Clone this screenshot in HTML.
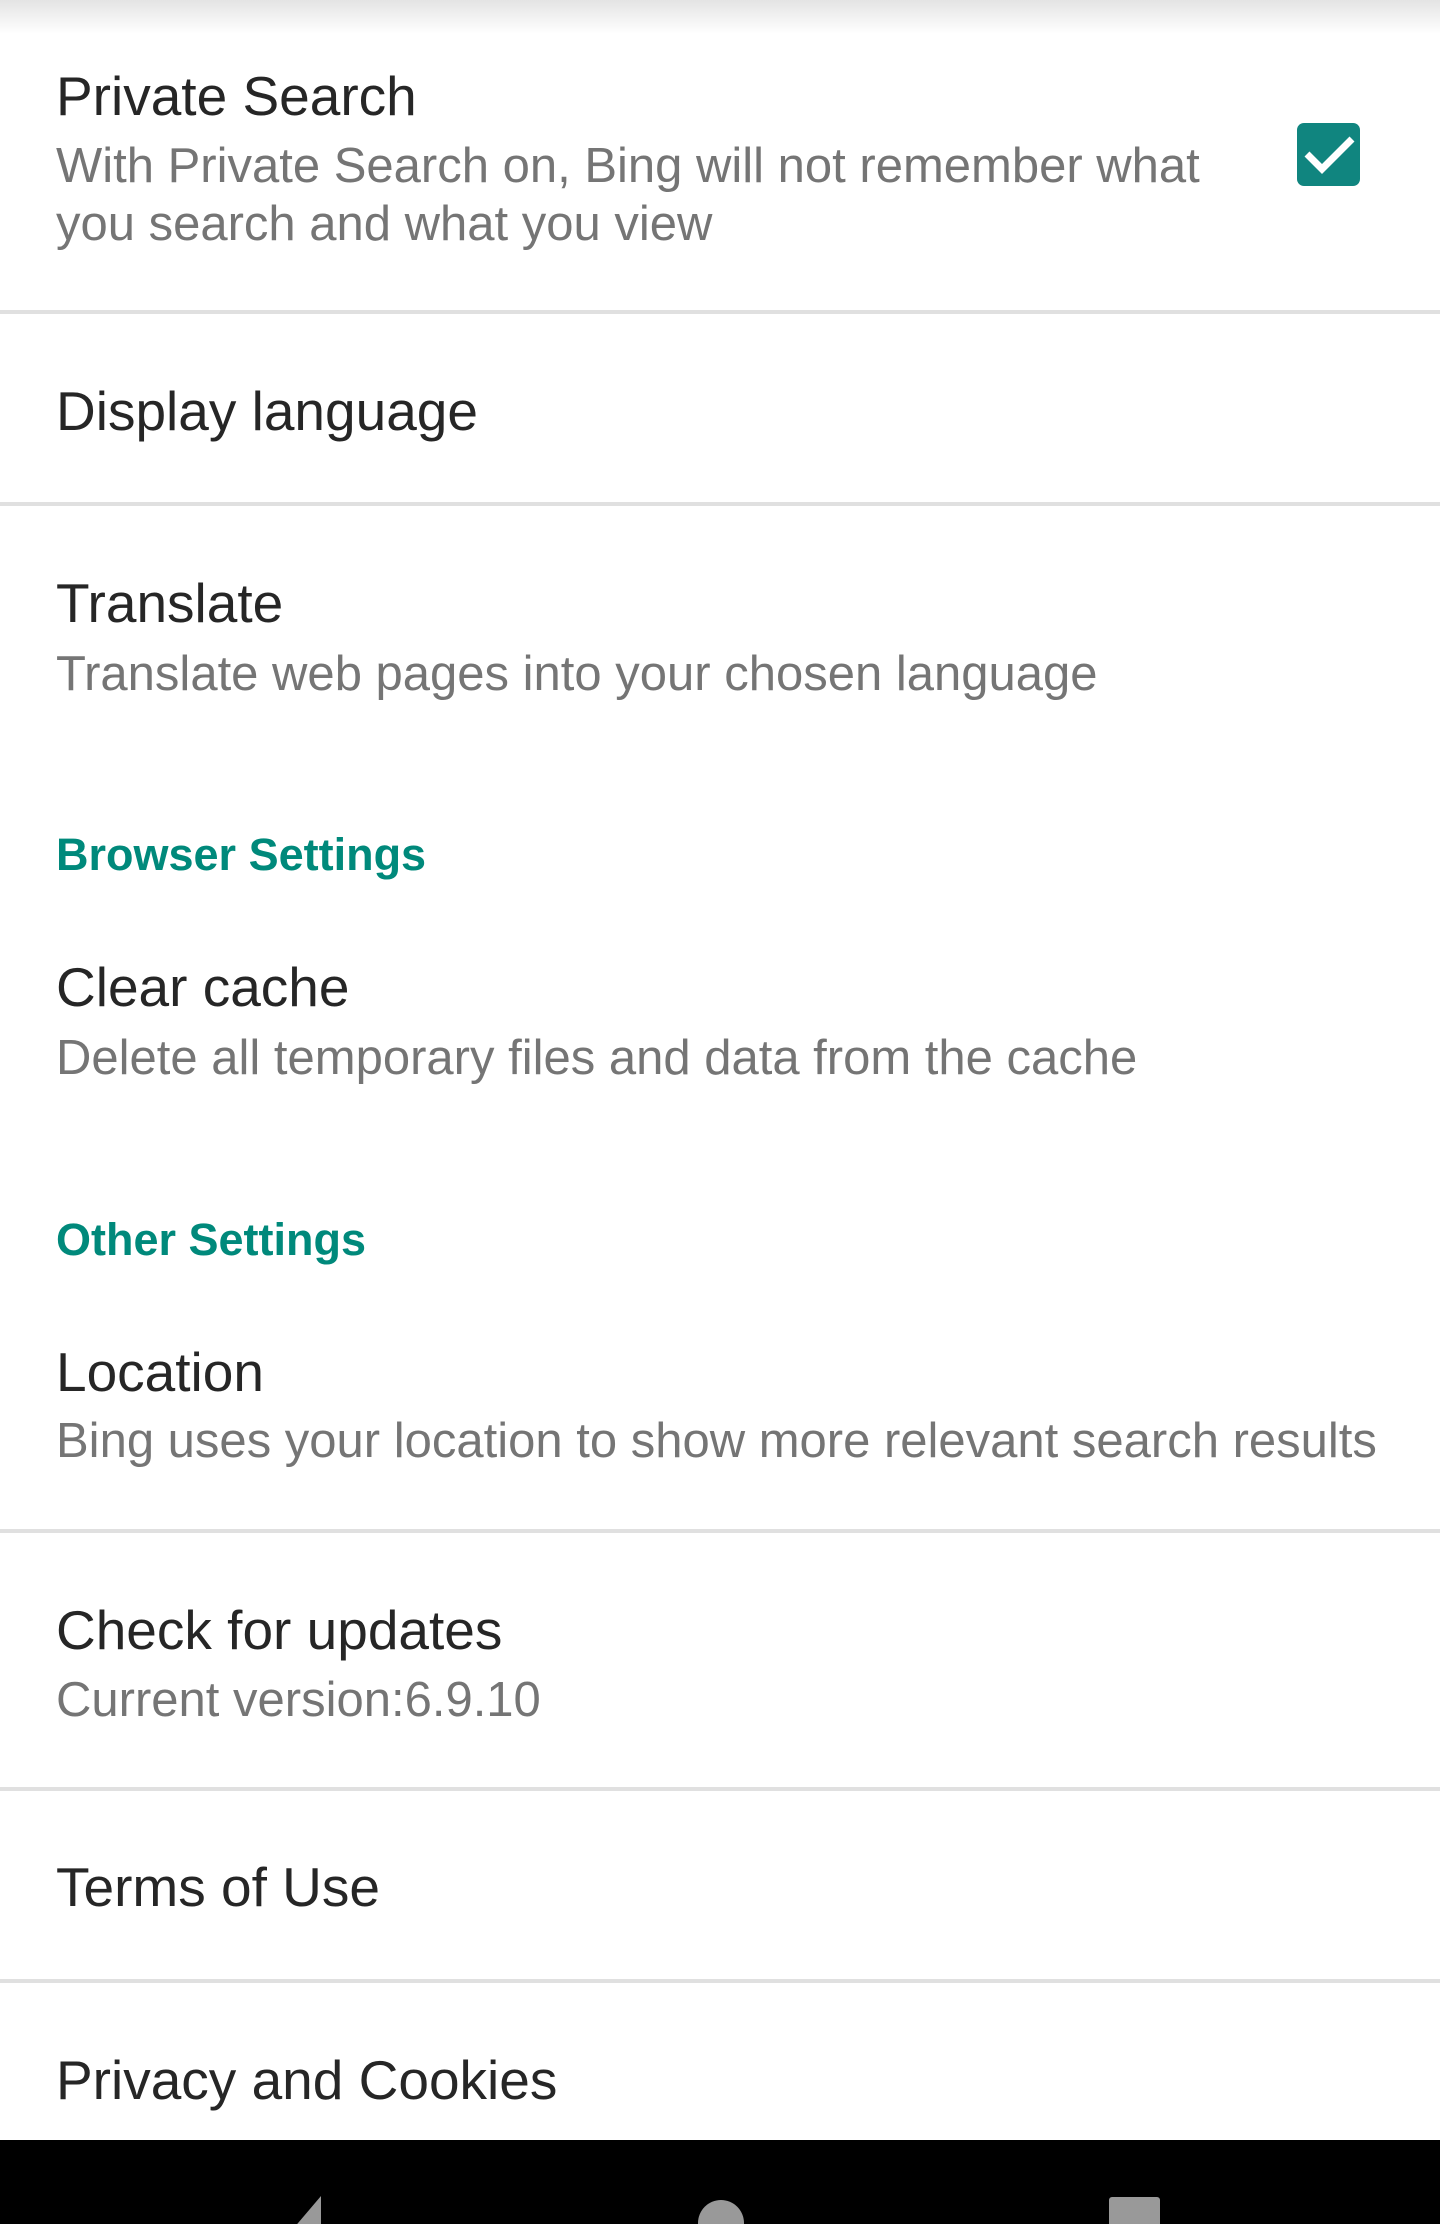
<!DOCTYPE html>
<html><head><meta charset="utf-8"><style>
html,body{margin:0;padding:0;width:1440px;height:2224px;overflow:hidden;}
#w{width:1440px;height:2224px;position:relative;background:#fff;overflow:hidden;font-family:"Liberation Sans",sans-serif;}
.t{position:absolute;left:56px;line-height:60px;height:60px;white-space:nowrap;}
.h{font-size:55px;color:#262626;}
.s{font-size:49px;color:#757575;}
.c{font-size:45px;color:#00897b;font-weight:bold;}
.d{position:absolute;left:0;width:1440px;height:4px;background:#e0e0e0;}
.sh{position:absolute;left:0;top:0;width:1440px;height:34px;background:linear-gradient(#e4e4e4,#fff);}
.nav{position:absolute;left:0;top:2140px;width:1440px;height:84px;background:#000;overflow:hidden;}
</style></head><body><div id="w">
<div class="sh"></div>
<div class="t h" style="top:66px">Private Search</div>
<div class="t s" style="top:136px">With Private Search on, Bing will not remember what</div>
<div class="t s" style="top:194px">you search and what you view</div>
<svg style="position:absolute;left:1297px;top:123px" width="63" height="63" viewBox="0 0 63 63">
<rect x="0" y="0" width="63" height="63" rx="7" fill="#10857f"/>
<path d="M10 31 L25 46 L55 16" stroke="#fff" stroke-width="7" fill="none"/>
</svg>
<div class="d" style="top:310px"></div>
<div class="t h" style="top:381px">Display language</div>
<div class="d" style="top:502px"></div>
<div class="t h" style="top:573px">Translate</div>
<div class="t s" style="top:644px">Translate web pages into your chosen language</div>
<div class="t c" style="top:825px">Browser Settings</div>
<div class="t h" style="top:957px">Clear cache</div>
<div class="t s" style="top:1028px">Delete all temporary files and data from the cache</div>
<div class="t c" style="top:1210px">Other Settings</div>
<div class="t h" style="top:1342px">Location</div>
<div class="t s" style="top:1411px">Bing uses your location to show more relevant search results</div>
<div class="d" style="top:1529px"></div>
<div class="t h" style="top:1600px">Check for updates</div>
<div class="t s" style="top:1670px">Current version:6.9.10</div>
<div class="d" style="top:1787px"></div>
<div class="t h" style="top:1857px">Terms of Use</div>
<div class="d" style="top:1979px"></div>
<div class="t h" style="top:2050px">Privacy and Cookies</div>
<div class="nav">
<svg style="position:absolute;left:270px;top:56px" width="60" height="28"><path d="M51 0 L51 60 L0 60 Z" fill="#999"/></svg>
<div style="position:absolute;left:698px;top:60px;width:46px;height:60px;border-radius:23px;background:#999"></div>
<div style="position:absolute;left:1109px;top:57px;width:51px;height:40px;border-radius:3px;background:#999"></div>
</div>
</div></body></html>
